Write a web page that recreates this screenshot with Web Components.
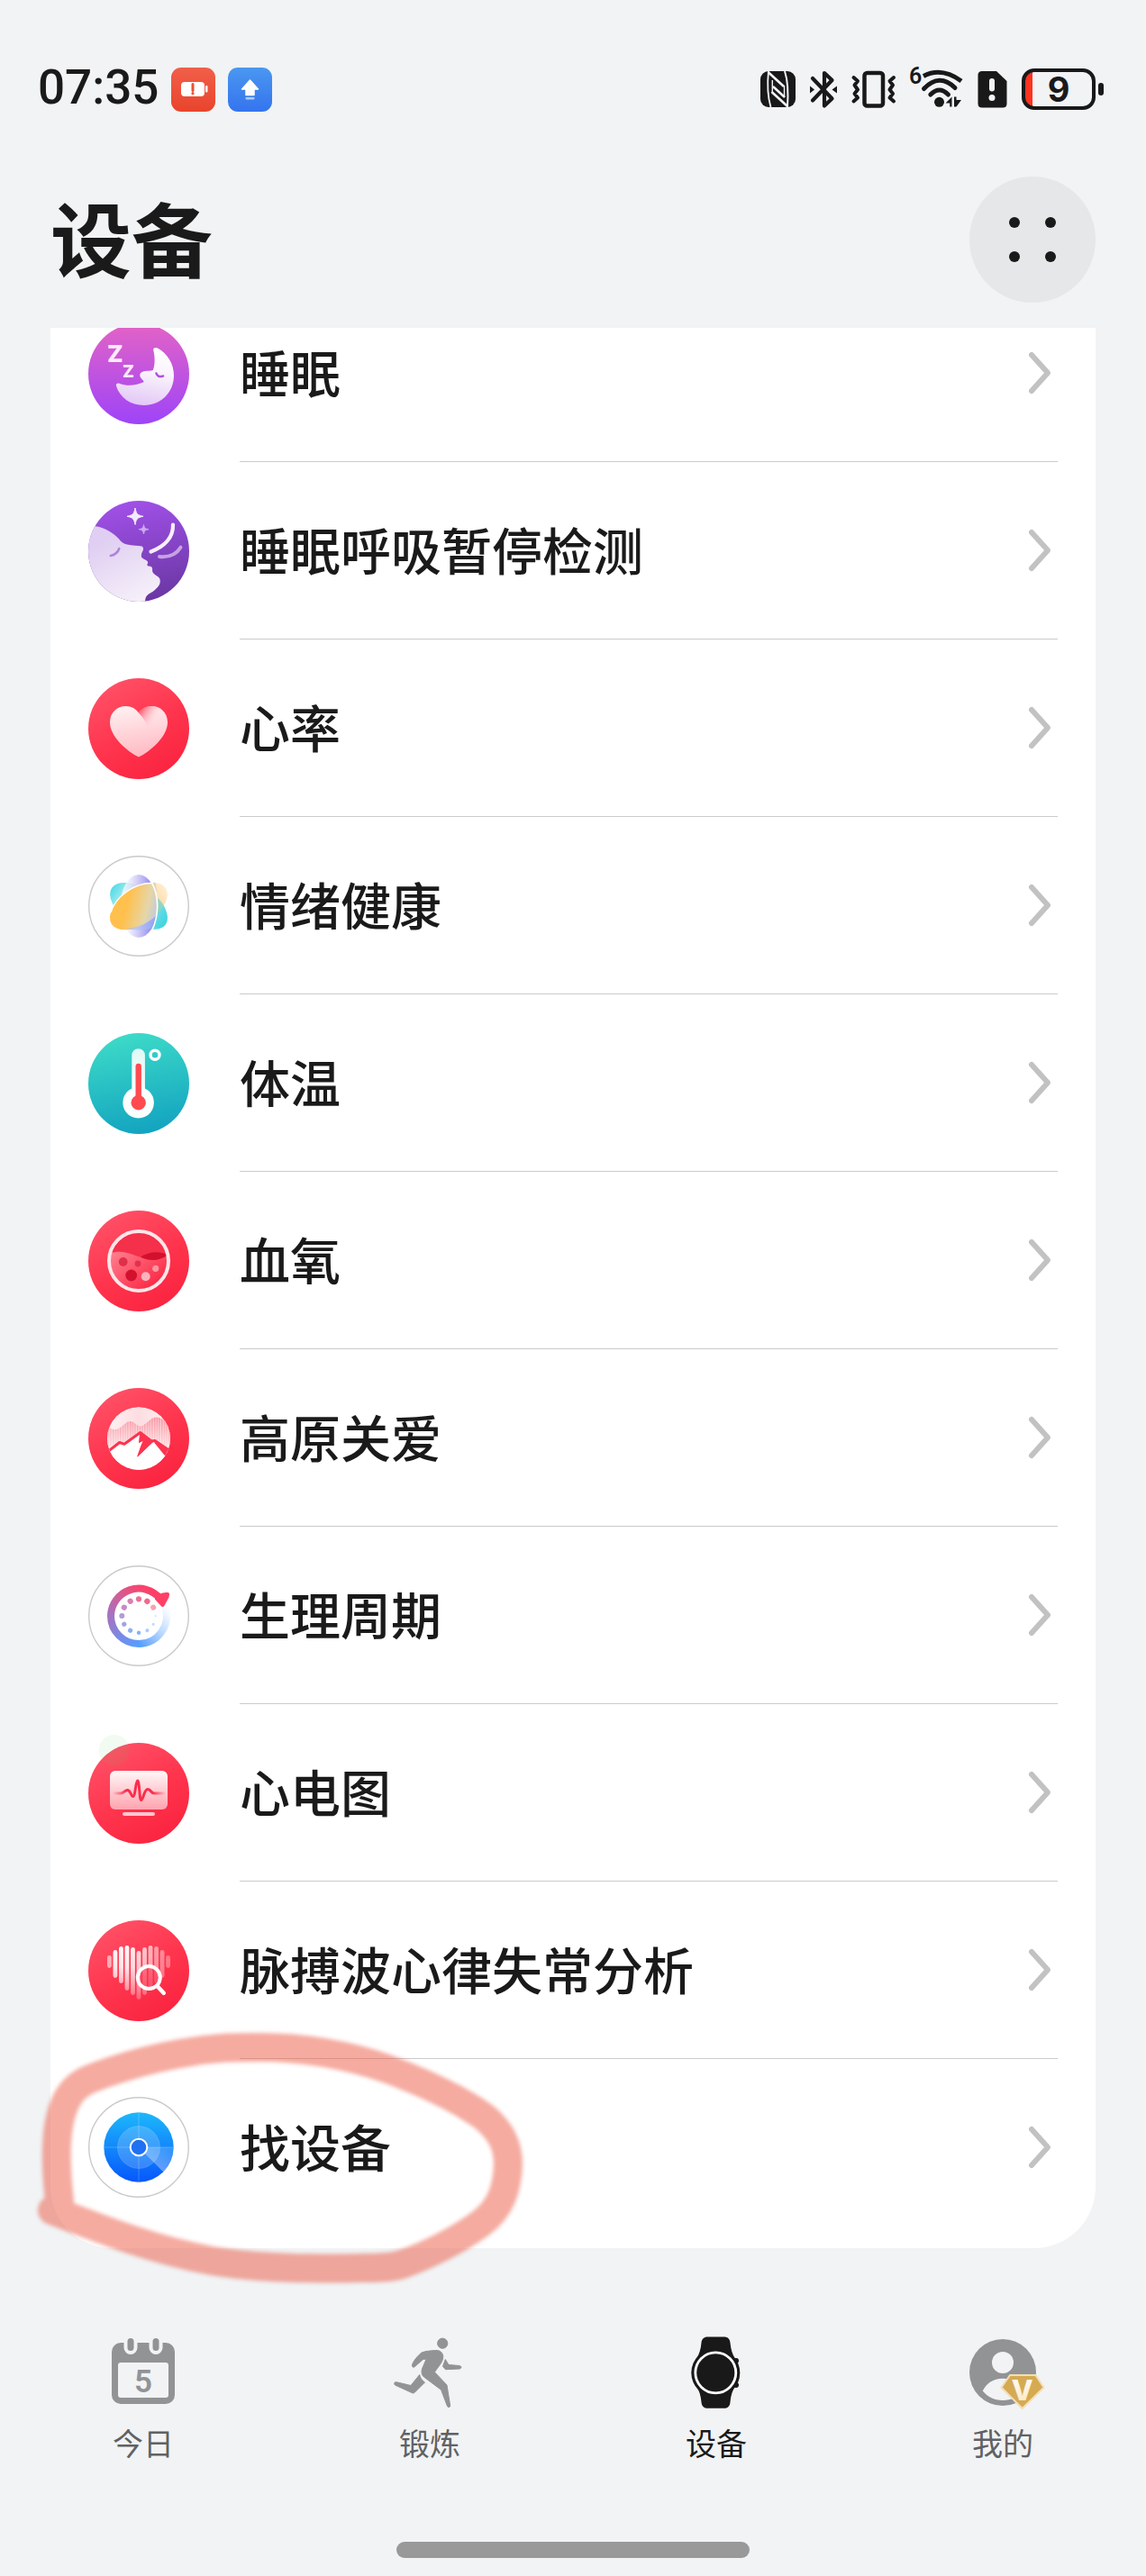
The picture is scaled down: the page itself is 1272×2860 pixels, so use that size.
<!DOCTYPE html>
<html lang="zh-CN">
<head>
<meta charset="utf-8">
<meta name="viewport" content="width=device-width, initial-scale=1">
<title>设备</title>
<style>
  body {
    margin: 0;
    background: #f1f3f5;
    color: #1a1a1a;
    font-family: "Noto Sans CJK SC", "Noto Sans", sans-serif;
  }
</style>
</head>
<body>
<device-page>
  <status-bar slot="status" time="07:35" battery="9"></status-bar>
  <page-header slot="header">设备</page-header>

  <device-row icon="sleep">睡眠</device-row>
  <device-row icon="apnea">睡眠呼吸暂停检测</device-row>
  <device-row icon="heart">心率</device-row>
  <device-row icon="mood">情绪健康</device-row>
  <device-row icon="temperature">体温</device-row>
  <device-row icon="oxygen">血氧</device-row>
  <device-row icon="plateau">高原关爱</device-row>
  <device-row icon="cycle">生理周期</device-row>
  <device-row icon="ecg">心电图</device-row>
  <device-row icon="pulse">脉搏波心律失常分析</device-row>
  <device-row icon="find">找设备</device-row>

  <marker-ring slot="overlay"></marker-ring>

  <tab-bar slot="tabs">
    <tab-item icon="today">今日</tab-item>
    <tab-item icon="run">锻炼</tab-item>
    <tab-item icon="watch" selected>设备</tab-item>
    <tab-item icon="profile">我的</tab-item>
  </tab-bar>
</device-page>

<script>
const redDisc = `
  <defs>
    <linearGradient id="red" x1="0.2" y1="0.05" x2="0.75" y2="1">
      <stop offset="0" stop-color="#ff5066"/>
      <stop offset="0.5" stop-color="#ff354e"/>
      <stop offset="1" stop-color="#fa233f"/>
    </linearGradient>
  </defs>
  <circle cx="56" cy="56" r="56" fill="url(#red)"/>`;

const whiteDisc = '<circle cx="56" cy="56" r="55.3" fill="#fff" stroke="#cacaca" stroke-width="1.4"/>';

const heartBars = [
  [39, 53, 0.6], [33, 64, 0.95], [29, 70, 0.95], [28, 78, 0.95], [30, 83, 0.9], [34, 88, 0.8],
  [30, 83, 0.7], [28, 78, 0.62], [29, 70, 0.5], [33, 64, 0.42], [39, 53, 0.36]
].map(([top, bottom, alpha], i) =>
  `<rect x="${21 + i * 6.52}" y="${top}" width="4.8" height="${bottom - top}" rx="2.4" fill="url(#bar)" opacity="${alpha}"/>`
).join('');

const cycleDots = [
  [3.1, '#ec7097'], [3.2, '#f0698c'], [3, '#f8a0b2'], [1.5, '#e3efff'], [1.5, '#bcd8ff'], [2, '#a9ccff'],
  [2.2, '#84b2fb'], [2.6, '#8bb0f2'], [2.6, '#a0a5e0'], [3, '#b59ad6'], [3.1, '#c48cc4'], [3.1, '#d781ad']
].map(([r, color], i) => `<circle cx="56" cy="37.3" r="${r}" fill="${color}" transform="rotate(${i * 30} 56 56)"/>`).join('');

// Each entry is [viewBox, markup]
const ICONS = {
  sleep: ['0 0 112 112', `
    <defs>
      <linearGradient id="g" x1="0" y1="0" x2="0" y2="1"><stop offset="0" stop-color="#e363c6"/><stop offset="1" stop-color="#9e44f8"/></linearGradient>
      <linearGradient id="m" x1="0.6" y1="0" x2="0.4" y2="1"><stop offset="0" stop-color="#fff"/><stop offset="0.4" stop-color="#faf3fc"/><stop offset="1" stop-color="#e2c8f6"/></linearGradient>
    </defs>
    <circle cx="56" cy="56" r="56" fill="url(#g)"/>
    <path d="M72.3 30C71.6 27 74.5 26.2 77 27.6C88 34 95 45 95 58C95 77 80 91 62 91C47 91 35 82.5 31 69.5C30.3 67 32.5 66 35 67C43 70 54 69 61.8 65C60.5 62.5 58.5 61.5 57.5 59C56.5 55.5 59 53.5 63 53C66 52.6 69 53 71.8 52C74.3 46 74 37 72.3 30Z" fill="url(#m)"/>
    <path d="M75.5 55.5Q77 60.5 83 58.5" fill="none" stroke="#ae52de" stroke-width="2.6" stroke-linecap="round"/>
    <g font-family="Inter, sans-serif" font-weight="800" fill="#fdeafb">
      <text x="21" y="43" font-size="26">Z</text>
      <text x="38" y="60" font-size="19">Z</text>
    </g>`],
  apnea: ['0 0 112 112', `
    <defs>
      <linearGradient id="g" x1="0.4" y1="0" x2="0.6" y2="1"><stop offset="0" stop-color="#a150e8"/><stop offset="1" stop-color="#6a37a3"/></linearGradient>
      <linearGradient id="f" x1="0.2" y1="0.2" x2="0.6" y2="1"><stop offset="0" stop-color="#e0cff2"/><stop offset="1" stop-color="#f5eff9"/></linearGradient>
      <clipPath id="c"><circle cx="56" cy="56" r="56"/></clipPath>
    </defs>
    <circle cx="56" cy="56" r="56" fill="url(#g)"/>
    <g clip-path="url(#c)">
      <path d="M0 28.3H8C19 30 28 36 33.7 42C37 46 39 48 43 48.5C49 50 55 49.5 59.5 50.5C61 51.5 61.3 53 60.8 55C59 58 58.7 60 58.9 62.3C60.5 65 64 65 66 67.7C66.6 69.5 65 70.5 65.5 71.7C67 73 69.5 72 70.7 74C71.6 76 70.5 77.5 71.7 79.8C74 83 78 83.5 79.5 87C80 90 79.8 91.5 78.7 93.5C75 99 71 101.5 67 103.5C63.5 106 63 109 63 114H0Z" fill="url(#f)"/>
    </g>
    <path d="M24.8 61Q32 59.5 34.3 53" fill="none" stroke="#b084dc" stroke-width="2.6" stroke-linecap="round"/>
    <path d="M52 8C53.2 14.5 54.5 16 61 17.3C54.5 18.6 53.2 20 52 26.5C50.8 20 49.5 18.6 43 17.3C49.5 16 50.8 14.5 52 8Z" fill="#f4ebfc" stroke="#f4ebfc" stroke-linejoin="round"/>
    <path d="M61.5 26.5C62.2 30.3 63 31 67 31.7C63 32.4 62.2 33.2 61.5 37C60.8 33.2 60 32.4 56 31.7C60 31 60.8 30.3 61.5 26.5Z" fill="#cdaaf0" stroke="#cdaaf0" stroke-linejoin="round"/>
    <path d="M69.5 56.5C84 51 94.5 41 94 26.5" fill="none" stroke="#f6effc" stroke-width="4.2" stroke-linecap="round"/>
    <path d="M79 62C90 63 98 59 102.5 51.7" fill="none" stroke="#c4a3e4" stroke-width="4" stroke-linecap="round"/>`],
  heart: ['0 0 112 112', redDisc + `
    <defs>
      <linearGradient id="h" x1="0.3" y1="0" x2="0.5" y2="1"><stop offset="0" stop-color="#fff0f1"/><stop offset="1" stop-color="#ffb9c2"/></linearGradient>
      <linearGradient id="s" gradientUnits="userSpaceOnUse" x1="58" y1="36" x2="74" y2="47"><stop offset="0" stop-color="#ff5f76"/><stop offset="1" stop-color="#ffd3d9" stop-opacity="0"/></linearGradient>
    </defs>
    <path d="M56 87.5C44 82 24 65 24 49C24 38 32 31 41.5 31C48 31 53 34 56 38.5C59 34 64 31 70.5 31C80 31 88 38 88 49C88 65 68 82 56 87.5Z" fill="url(#h)"/>
    <path d="M56 38.5C59 34 64 31 70.5 31C77 31 83 34 86 40L66 53C63 47 60 43 56 38.5Z" fill="url(#s)"/>`],
  mood: ['0 0 112 112', whiteDisc + `
    <defs>
      <linearGradient id="cy" x1="0" y1="0" x2="1" y2="0"><stop offset="0" stop-color="#55dbe6"/><stop offset="0.3" stop-color="#bff1f5"/><stop offset="0.7" stop-color="#b5f0f5"/><stop offset="1" stop-color="#40d6e2"/></linearGradient>
      <linearGradient id="pu" x1="0" y1="0" x2="1" y2="0"><stop offset="0.1" stop-color="#fff" stop-opacity="0.7"/><stop offset="0.85" stop-color="#9088ec"/></linearGradient>
      <linearGradient id="or" gradientUnits="userSpaceOnUse" x1="46" y1="47" x2="74" y2="78"><stop offset="0" stop-color="#ffc04d"/><stop offset="0.55" stop-color="#e6d6a8"/><stop offset="1" stop-color="#a9c6fa"/></linearGradient>
      <linearGradient id="tip" x1="0" y1="0" x2="1" y2="0"><stop offset="0.7" stop-color="#ffcd7c"/><stop offset="1" stop-color="#ffe9c8"/></linearGradient>
      <clipPath id="left"><path d="M0 0H66C80 32 80 76 66 112H0Z"/></clipPath>
    </defs>
    <ellipse cx="56" cy="56" rx="36" ry="20" fill="url(#cy)" transform="rotate(34 56 56)"/>
    <ellipse cx="56" cy="56" rx="36" ry="20" fill="url(#tip)" opacity="0.8" transform="rotate(-34 56 56)"/>
    <path d="M77 47C84 53 89 63 87.5 72C86 80 80 81 73 80C77 69 78 58 77 47Z" fill="#40d3df" opacity="0.55"/>
    <ellipse cx="56" cy="56" rx="20.5" ry="35" fill="url(#pu)"/>
    <g clip-path="url(#left)">
      <ellipse cx="56" cy="56" rx="36" ry="20.5" fill="url(#or)" transform="rotate(-34 56 56)"/>
      <path d="M25 63C30 46 51 29.5 72 30.5" fill="none" stroke="#fff" stroke-width="1.4"/>
      <path d="M42 81C56 80 66 74 75 67L70 81Q56 84 42 81Z" fill="#a6bdf6" opacity="0.6"/>
    </g>
    <path d="M70 29C79 44 79 68 69 86" fill="none" stroke="#fff" stroke-width="1.6"/>`],
  temperature: ['0 0 112 112', `
    <defs>
      <linearGradient id="g" x1="0.4" y1="0" x2="0.6" y2="1"><stop offset="0" stop-color="#3ddac8"/><stop offset="1" stop-color="#12a3c0"/></linearGradient>
      <linearGradient id="t" x1="0" y1="0" x2="0" y2="1"><stop offset="0" stop-color="#e0f8f5"/><stop offset="0.6" stop-color="#fafffe"/></linearGradient>
    </defs>
    <circle cx="56" cy="56" r="56" fill="url(#g)"/>
    <path d="M48.3 24.5a7.3 7.3 0 0 1 14.6 0V61.5a17.3 17.3 0 1 1-14.6 0Z" fill="url(#t)"/>
    <path d="M55.7 37V77" stroke="#ff4a50" stroke-width="6.4" stroke-linecap="round"/>
    <circle cx="55.7" cy="77.3" r="8.2" fill="#ff4a50"/>
    <circle cx="74" cy="24.3" r="5" fill="none" stroke="#fff" stroke-width="3.4"/>`],
  oxygen: ['0 0 112 112', redDisc + `
    <defs>
      <linearGradient id="w" x1="0" y1="0" x2="0.8" y2="0.7"><stop offset="0" stop-color="#ff8493"/><stop offset="1" stop-color="#fb2e49"/></linearGradient>
      <clipPath id="c"><circle cx="56" cy="56" r="31.5"/></clipPath>
    </defs>
    <circle cx="56" cy="56" r="32" fill="#f4304b"/>
    <g clip-path="url(#c)">
      <path d="M22 48C38 42 48 49 58 51.7C67 55.5 76 56 90 50V92H22Z" fill="url(#w)"/>
      <path d="M58 51.7C67 46 77 44.5 88 49C78 57 68 56 58 51.7Z" fill="#d2112f"/>
    </g>
    <circle cx="38.7" cy="57" r="4.9" fill="#df3049"/>
    <circle cx="55" cy="59" r="3.4" fill="#e0324b"/>
    <circle cx="47.7" cy="72" r="6.4" fill="#d2112f"/>
    <circle cx="63.7" cy="73.3" r="5" fill="#f9b4be"/>
    <circle cx="74.7" cy="64.3" r="3.6" fill="#f896a4"/>
    <circle cx="56" cy="56" r="33" fill="none" stroke="#ffe6e9" stroke-width="4"/>`],
  plateau: ['0 0 112 112', redDisc + `
    <defs>
      <linearGradient id="i" x1="0" y1="0" x2="1" y2="0"><stop offset="0" stop-color="#fff0f2"/><stop offset="0.5" stop-color="#fcdde1"/><stop offset="1" stop-color="#fff0f2"/></linearGradient>
      <linearGradient id="fade" x1="0" y1="0" x2="0" y2="1"><stop offset="0" stop-color="#fff" stop-opacity="0"/><stop offset="1" stop-color="#fff" stop-opacity="0.8"/></linearGradient>
      <pattern id="p" width="2.7" height="8" patternUnits="userSpaceOnUse"><rect width="2.7" height="8" fill="#fdc3ca"/><rect width="1.4" height="8" fill="#f88e9b"/></pattern>
      <clipPath id="c"><circle cx="56" cy="56" r="35"/></clipPath>
    </defs>
    <g clip-path="url(#c)">
      <circle cx="56" cy="56" r="35" fill="url(#i)"/>
      <path d="M20 42C26 46 30 47 34 45C39 42 42 37 46.5 37C51 37 54 43 58.7 42.5C64 41 69 32.5 75.5 32.5C82 32.5 85 37 92 44V72H20Z" fill="url(#p)"/>
      <path d="M20 42C26 46 30 47 34 45C39 42 42 37 46.5 37C51 37 54 43 58.7 42.5C64 41 69 32.5 75.5 32.5C82 32.5 85 37 92 44V72H20Z" fill="url(#fade)"/>
      <path d="M20 72L34.7 60.5L40 62.3L57.7 49.5L70 59L74 58.5L92 71V95H20Z" fill="#fff" stroke="#fc3350" stroke-width="3" stroke-linejoin="round"/>
      <path d="M57.7 49L72 59.5L54.7 76L58.5 65L61.5 58L56.5 60.5Z" fill="#fc3350" stroke="#fc3350" stroke-linejoin="round"/>
      <path d="M73 57L92 69V81L84 74L73.5 61Z" fill="#fc3350"/>
    </g>`],
  cycle: ['0 0 112 112', whiteDisc + `
    <defs>
      <linearGradient id="a" x1="0" y1="1" x2="1" y2="0.3"><stop offset="0" stop-color="#a473c2"/><stop offset="0.5" stop-color="#d65c92"/><stop offset="1" stop-color="#ff3f64"/></linearGradient>
      <linearGradient id="b" x1="0" y1="0" x2="1" y2="1"><stop offset="0" stop-color="#a473c2"/><stop offset="1" stop-color="#569dff"/></linearGradient>
      <linearGradient id="d" x1="0" y1="1" x2="0.9" y2="0"><stop offset="0" stop-color="#569dff"/><stop offset="0.6" stop-color="#bfdcff"/><stop offset="1" stop-color="#f7fbff"/></linearGradient>
    </defs>
    <g fill="none" stroke-width="8">
      <path d="M56 87A31 31 0 0 0 85.5 46.5" stroke="url(#d)"/>
      <path d="M25 56A31 31 0 0 0 56.3 87" stroke="url(#b)"/>
      <path d="M25 56.3A31 31 0 0 1 80 37" stroke="url(#a)"/>
    </g>
    <path d="M80 33.5Q84 31.5 88 32L87.5 35L82.5 44L76 37Z" fill="#ff3f66" stroke="#ff3f66" stroke-width="4" stroke-linejoin="round"/>
    ${cycleDots}`],
  ecg: ['0 0 112 112', redDisc + `
    <defs>
      <linearGradient id="s" x1="0" y1="0" x2="0" y2="1"><stop offset="0" stop-color="#fff8f8"/><stop offset="1" stop-color="#ffa3af"/></linearGradient>
      <linearGradient id="l" gradientUnits="userSpaceOnUse" x1="27" y1="0" x2="86" y2="0"><stop offset="0" stop-color="#fc2c4a" stop-opacity="0"/><stop offset="0.25" stop-color="#fc2c4a"/><stop offset="0.75" stop-color="#fc2c4a"/><stop offset="1" stop-color="#fc2c4a" stop-opacity="0"/></linearGradient>
    </defs>
    <rect x="24" y="31" width="64" height="43" rx="6" fill="url(#s)"/>
    <path d="M27 56H36C40 56 41 51.7 44 52.5C47 53.5 47.5 59 49.5 59.5C52.5 59.5 52.5 42 54.7 42C57 42 56.5 63.5 58.7 63.5C61 63.5 62 51.5 66 51.5C69.5 51.5 69.5 56 73 56H86" fill="none" stroke="url(#l)" stroke-width="3" stroke-linejoin="round"/>
    <rect x="38" y="77" width="36" height="4" rx="2" fill="#ffc8d0"/>
    <circle cx="28.7" cy="8" r="17" fill="#50c85a" opacity="0.08"/>`],
  pulse: ['0 0 112 112', redDisc + `
    <defs>
      <linearGradient id="bar" gradientUnits="userSpaceOnUse" x1="0" y1="28" x2="0" y2="88"><stop offset="0" stop-color="#fff"/><stop offset="0.4" stop-color="#fff0f2"/><stop offset="1" stop-color="#fff" stop-opacity="0.3"/></linearGradient>
    </defs>
    ${heartBars}
    <circle cx="67.3" cy="63.5" r="12.5" fill="#fc3350" opacity="0.55"/>
    <path d="M76.5 73L83.7 80.7" stroke="#fff" stroke-width="4.6" stroke-linecap="round"/>
    <circle cx="67.3" cy="63.5" r="12.5" fill="none" stroke="#fff" stroke-width="4"/>`],
  find: ['0 0 112 112', whiteDisc + `
    <defs>
      <linearGradient id="g" x1="0" y1="0" x2="0" y2="1"><stop offset="0" stop-color="#1db8fb"/><stop offset="1" stop-color="#0757fb"/></linearGradient>
      <linearGradient id="sweep" gradientUnits="userSpaceOnUse" x1="92" y1="50" x2="74" y2="80"><stop offset="0" stop-color="#fff" stop-opacity="0.08"/><stop offset="1" stop-color="#fff" stop-opacity="0.38"/></linearGradient>
    </defs>
    <circle cx="56" cy="56" r="38.7" fill="url(#g)"/>
    <path d="M56 56L94.7 56A38.7 38.7 0 0 1 83.4 83.4Z" fill="url(#sweep)"/>
    <circle cx="56" cy="56" r="23.5" fill="#fff" fill-opacity="0.18" stroke="#fff" stroke-opacity="0.15"/>
    <path d="M17.3 56H94.7M56 17.3V94.7" stroke="#fff" stroke-opacity="0.22"/>
    <circle cx="56" cy="56" r="9.3" fill="#1f70f3" stroke="#fff" stroke-width="2"/>`],
  chevron: ['0 0 40 48', '<path d="M11 4L29 24L11 44" fill="none" stroke="#c2c2c2" stroke-width="6" stroke-linecap="round" stroke-linejoin="round"/>'],
  dots: ['0 0 64 64', '<g fill="#191b1a"><circle cx="12" cy="13" r="6"/><circle cx="52" cy="13" r="6"/><circle cx="12" cy="51" r="6"/><circle cx="52" cy="51" r="6"/></g>'],
  today: ['0 0 80 80', `
    <path d="M15 9H65A10 10 0 0 1 75 19V67A10 10 0 0 1 65 77H15A10 10 0 0 1 5 67V19A10 10 0 0 1 15 9Z" fill="#929395"/>
    <rect x="12" y="31" width="56" height="39" rx="3" fill="#f1f3f5"/>
    <path d="M26 6V14.5M54 6V14.5" stroke="#f1f3f5" stroke-width="15" stroke-linecap="round"/>
    <path d="M26 7.5V14.5M54 7.5V14.5" stroke="#929395" stroke-width="7" stroke-linecap="round"/>
    <text x="40" y="64" text-anchor="middle" font-family="Roboto, sans-serif" font-size="35" font-weight="600" fill="#929395">5</text>`],
  run: ['0 0 80 80', `
    <g fill="#929395" stroke="#929395" stroke-linejoin="round">
      <circle cx="54.2" cy="9.7" r="5.6"/>
      <path d="M31 20C36 18 41 18 46.6 17.5C51 17 55 20 54.8 25C54.5 31 49 36 45.5 41.7L59 56L62.7 79C62.5 81 60 81 59.5 79.5L52.6 61.3L33.5 47C31 45 30.5 41.5 31.5 38L36 27.5L40 26.7L32.5 27.5L23.5 35.5C22 37 20 36 20.5 33.5C22 29 27 23 31 20Z"/>
      <path d="M57.3 27.5L61 33.5L73 34.5C75.5 35 75.5 37.5 73 38L57.5 38.7L54.5 35.3Z"/>
      <path d="M28.7 44.5C29.5 48 31 50.5 34.5 53L23 64.5C22 65.2 21 65 20 64.5L1.5 56C0 54.5 0.5 52.5 3 52.7L19 56.5Z"/>
    </g>`],
  watch: ['0 0 80 80', `
    <g fill="#191919">
      <path d="M23.5 9C24 4 27 2.5 31 2.5H48.5C52.5 2.5 55 4.5 55.5 9C56 16 58 22 61 27L63 29.5V55.5L61 57C58 62 56 68 55.5 75C55 80 52.5 81.8 48.5 81.8H31C26.5 81.8 24 80 23.5 75C23 68 21 62 18 57V27C21 22 23 16 23.5 9Z"/>
      <circle cx="39.3" cy="42.3" r="27"/>
      <circle cx="62" cy="29" r="3"/>
      <circle cx="62" cy="56" r="3"/>
    </g>
    <circle cx="39.3" cy="42.3" r="22.5" fill="none" stroke="#fff" stroke-width="2.8"/>`],
  profile: ['0 0 80 80', `
    <defs>
      <linearGradient id="v" x1="0" y1="0" x2="0" y2="1"><stop offset="0" stop-color="#fff"/><stop offset="1" stop-color="#fae6bd"/></linearGradient>
    </defs>
    <circle cx="40" cy="42" r="37" fill="#929395"/>
    <circle cx="40" cy="31" r="12" fill="#f1f3f5"/>
    <path d="M17.7 62.5C22 54 29 48.7 40 48.7S58 54 62.3 62.5C57 69 49 73 40 73S23 69 17.7 62.5Z" fill="#f1f3f5"/>
    <path d="M48 45H76.5L85.5 58.7L61.7 82L38.5 58.7Z" fill="#d5aa53" stroke="#f2dfb8" stroke-width="2" stroke-linejoin="round"/>
    <text x="61.7" y="73" text-anchor="middle" font-family="Inter, sans-serif" font-size="31" font-weight="800" fill="url(#v)">V</text>`],
  lowBattery: ['0 0 49 49', `
    <defs><linearGradient id="g" x1="0" y1="0" x2="0" y2="1"><stop offset="0" stop-color="#f15f4a"/><stop offset="1" stop-color="#e9442c"/></linearGradient></defs>
    <rect width="49" height="49" rx="11" fill="url(#g)"/>
    <rect x="11" y="16" width="26" height="16" rx="4" fill="#fff"/>
    <rect x="38" y="20" width="2.5" height="7.5" rx="1" fill="#fff"/>
    <path d="M24 18.5V25.5" stroke="#ec5039" stroke-width="3" stroke-linecap="round"/>
    <circle cx="24" cy="28.7" r="1.6" fill="#ec5039"/>`],
  upload: ['0 0 49 49', `
    <defs><linearGradient id="g" x1="0" y1="0" x2="0" y2="1"><stop offset="0" stop-color="#4a97f1"/><stop offset="1" stop-color="#3574ee"/></linearGradient></defs>
    <rect width="49" height="49" rx="11" fill="url(#g)"/>
    <path d="M24.5 14L33.5 24H29V30.5H20V24H15.5Z" fill="#fff" stroke="#fff" stroke-width="1.5" stroke-linejoin="round"/>
    <rect x="19.5" y="33" width="10" height="2.6" rx="1" fill="#fff" opacity="0.6"/>`],
  nfc: ['0 0 39 40', `
    <rect width="39" height="40" rx="9" fill="#191919"/>
    <g fill="none" stroke="#f1f3f5">
      <path d="M9 0C7.5 14 8 28 11.5 40" stroke-width="1.8"/>
      <path d="M27 0C31 12 31 26 30 40" stroke-width="2"/>
      <path d="M8.5 1L26 17" stroke-width="2.6"/>
      <path d="M14 17L27 29" stroke-width="2.6"/>
      <path d="M12.5 23L30 39" stroke-width="2.6"/>
      <path d="M13.3 10V24M26.5 16V29" stroke-width="1.4"/>
    </g>`],
  bluetooth: ['0 0 30 42', `
    <path d="M3 9L24.5 31.5L16 39.5V3L24.5 11L3 33.5" fill="none" stroke="#191919" stroke-width="4.2" stroke-linecap="round" stroke-linejoin="round"/>
    <path d="M0 17.5L5 21.5L0 25.5ZM30 17.5L24.5 21.5L30 25.5Z" fill="#191919"/>`],
  vibrate: ['0 0 50 42', `
    <g fill="none" stroke="#191919" stroke-linecap="round" stroke-linejoin="round">
      <rect x="14.5" y="3" width="20.5" height="36.5" rx="3" stroke-width="4.5"/>
      <path d="M2.5 8L7 12L3.5 16.5L7 21.5L3.5 26L7 30.5L2.5 34.5M47 8L42.5 12L46 16.5L42.5 21.5L46 26L42.5 30.5L47 34.5" stroke-width="4"/>
    </g>`],
  wifi: ['0 0 58 52', `
    <text x="-2" y="20" font-family="Roboto, sans-serif" font-size="25" font-weight="600" fill="#191919">6</text>
    <g fill="none" stroke="#191919" stroke-width="5">
      <path d="M14 11.5Q34 1 56 17"/>
      <path d="M14.5 25.5Q31.7 7.5 49 24.5" stroke-linecap="round"/>
      <path d="M21.8 32Q31.7 22 41.5 32" stroke-linecap="round"/>
    </g>
    <circle cx="31.5" cy="40.3" r="5.5" fill="#191919"/>
    <path d="M38.5 41.5L45.5 34.5V45.5H43.2V41.5ZM48 34.5H50.5V38L56 38L50.5 45.5H48Z" fill="#191919"/>`],
  sim: ['0 0 33 42', `
    <path d="M5 1H21L32.5 12V37Q32.5 41.5 28 41.5H5Q0.5 41.5 0.5 37V5.5Q0.5 1 5 1Z" fill="#191919"/>
    <path d="M16 12V20.5" stroke="#f1f3f5" stroke-width="6" stroke-linecap="round"/>
    <circle cx="16" cy="30.5" r="3.5" fill="#f1f3f5"/>`]
};

class AppIcon extends HTMLElement {
  connectedCallback() {
    const [viewBox, markup] = ICONS[this.getAttribute('name')];
    const [, , width, height] = viewBox.split(' ');
    this.attachShadow({mode: 'open'}).innerHTML = `
      <style>
        :host { display: block; flex: none; width: ${width}px; height: ${height}px; }
        svg { display: block; width: 100%; height: 100%; overflow: visible; }
      </style>
      <svg viewBox="${viewBox}" aria-hidden="true">${markup}</svg>`;
  }
}

class StatusBar extends HTMLElement {
  connectedCallback() {
    this.attachShadow({mode: 'open'}).innerHTML = `
      <style>
        :host {
          display: flex;
          align-items: center;
          justify-content: space-between;
          box-sizing: border-box;
          height: 168px;
          padding: 30px 47px 0 42px;
        }
        .side { display: flex; align-items: center; gap: 14px; }
        .system { gap: 16px; }
        time { font: 500 53px/64px Roboto, sans-serif; padding-bottom: 4px; }
        .battery {
          position: relative;
          display: flex;
          align-items: center;
          justify-content: center;
          box-sizing: border-box;
          width: 82px;
          height: 46px;
          margin-right: 9px;
          border: 4px solid #191919;
          border-radius: 14px;
          background: linear-gradient(to right, #ff3220 8px, transparent 8px);
          font: 700 38px/38px Inter, sans-serif;
        }
        .battery::after {
          content: '';
          position: absolute;
          right: -13px;
          width: 6px;
          height: 14px;
          border-radius: 3px;
          background: #191919;
        }
      </style>
      <div class="side">
        <time>${this.getAttribute('time')}</time>
        <app-icon name="lowBattery"></app-icon>
        <app-icon name="upload"></app-icon>
      </div>
      <div class="side system">
        <app-icon name="nfc"></app-icon>
        <app-icon name="bluetooth"></app-icon>
        <app-icon name="vibrate"></app-icon>
        <app-icon name="wifi"></app-icon>
        <app-icon name="sim"></app-icon>
        <div class="battery">${this.getAttribute('battery')}</div>
      </div>`;
  }
}

class PageHeader extends HTMLElement {
  connectedCallback() {
    this.attachShadow({mode: 'open'}).innerHTML = `
      <style>
        :host {
          display: flex;
          align-items: center;
          justify-content: space-between;
          height: 196px;
          padding: 0 56px;
        }
        h1 { margin: 0; padding-bottom: 8px; font-size: 90px; line-height: 120px; font-weight: 700; }
        button {
          display: flex;
          align-items: center;
          justify-content: center;
          width: 140px;
          height: 140px;
          padding: 0;
          border: 0;
          border-radius: 50%;
          background: #e6e7e9;
        }
      </style>
      <h1><slot></slot></h1>
      <button type="button" aria-label="更多"><app-icon name="dots"></app-icon></button>`;
  }
}

class DeviceRow extends HTMLElement {
  connectedCallback() {
    this.attachShadow({mode: 'open'}).innerHTML = `
      <style>
        :host { display: block; }
        a {
          display: flex;
          align-items: center;
          gap: 56px;
          padding: 0 42px;
          color: inherit;
          text-decoration: none;
        }
        .body {
          flex: 1;
          display: flex;
          align-items: center;
          justify-content: space-between;
          height: 196px;
          border-bottom: 1px solid #cbcbcb;
        }
        :host(:last-of-type) .body { border-bottom: 0; }
        .label { padding-bottom: 4px; font-size: 56px; line-height: 80px; font-weight: 500; }
      </style>
      <a href="#${this.getAttribute('icon')}">
        <app-icon name="${this.getAttribute('icon')}"></app-icon>
        <span class="body">
          <span class="label"><slot></slot></span>
          <app-icon name="chevron"></app-icon>
        </span>
      </a>`;
  }
}

// Hand-drawn highlight around the last row
class MarkerRing extends HTMLElement {
  connectedCallback() {
    this.attachShadow({mode: 'open'}).innerHTML = `
      <style>
        :host { position: absolute; left: 0; bottom: 0; width: 640px; height: 320px; pointer-events: none; }
        svg { display: block; filter: blur(2px); }
      </style>
      <svg width="640" height="320" viewBox="0 0 640 320" aria-hidden="true">
        <path d="M66 204C61 160 61 125 70 101C76 84 85 75 98 69C125 58 165 46 200 40C235 33 260 33 288 33C345 33 390 43 430 57C470 72 510 91 537 110C556 126 564 142 564 163C563 190 556 212 533 229C510 246 475 264 446 274C434 278 415 278 400 278C370 279 345 278 326 278C290 277 265 275 235 270C170 258 115 236 58 214"
          fill="none" stroke="#eb5741" stroke-opacity="0.5" stroke-width="32" stroke-linecap="round" stroke-linejoin="round"/>
      </svg>`;
  }
}

class TabItem extends HTMLElement {
  connectedCallback() {
    const selected = this.hasAttribute('selected');
    this.attachShadow({mode: 'open'}).innerHTML = `
      <style>
        :host { display: block; flex: 1; }
        a {
          display: flex;
          flex-direction: column;
          align-items: center;
          gap: 18px;
          color: ${selected ? '#1a1a1a' : '#606163'};
          text-decoration: none;
        }
        span { font-size: 34px; line-height: 44px; }
      </style>
      <a href="#${this.getAttribute('icon')}" ${selected ? 'aria-current="page"' : ''}>
        <app-icon name="${this.getAttribute('icon')}"></app-icon>
        <span><slot></slot></span>
      </a>`;
  }
}

class TabBar extends HTMLElement {
  connectedCallback() {
    this.attachShadow({mode: 'open'}).innerHTML = `
      <style>
        :host { display: block; padding: 32px 0 20px; }
        nav { display: flex; }
        .handle {
          width: 392px;
          height: 18px;
          margin: 88px auto 0;
          border-radius: 9px;
          background: #999;
        }
      </style>
      <nav><slot></slot></nav>
      <div class="handle"></div>`;
  }
}

class DevicePage extends HTMLElement {
  connectedCallback() {
    this.attachShadow({mode: 'open'}).innerHTML = `
      <style>
        :host { display: flex; flex-direction: column; height: 100vh; }
        /* the list is scrolled to its end, so the first row runs under the header */
        main {
          position: relative;
          flex: 1;
          min-height: 0;
          display: flex;
          flex-direction: column;
          justify-content: flex-end;
          overflow: hidden;
          padding: 0 56px 64px;
        }
        .card {
          padding-bottom: 14px;
          border-radius: 0 0 68px 68px;
          background: #fff;
        }
      </style>
      <slot name="status"></slot>
      <slot name="header"></slot>
      <main>
        <div class="card"><slot></slot></div>
        <slot name="overlay"></slot>
      </main>
      <slot name="tabs"></slot>`;
  }
}

customElements.define('app-icon', AppIcon);
customElements.define('status-bar', StatusBar);
customElements.define('page-header', PageHeader);
customElements.define('device-row', DeviceRow);
customElements.define('marker-ring', MarkerRing);
customElements.define('tab-item', TabItem);
customElements.define('tab-bar', TabBar);
customElements.define('device-page', DevicePage);
</script>
</body>
</html>
